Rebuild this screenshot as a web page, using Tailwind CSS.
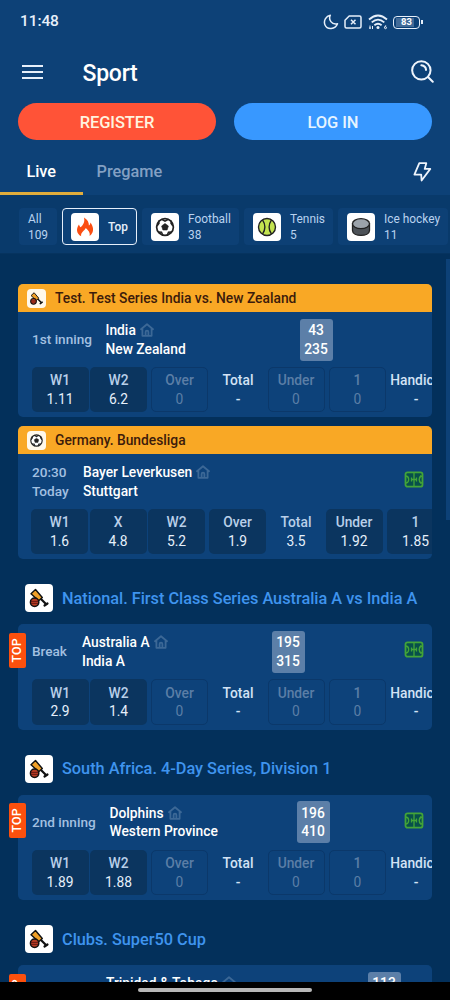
<!DOCTYPE html>
<html lang="en">
<head>
<meta charset="utf-8">
<meta name="viewport" content="width=device-width, initial-scale=1">
<title>Sport</title>
<script src="https://cdn.jsdelivr.net/npm/@tailwindcss/browser@4"></script>
</head>
<body class="bg-black">
<svg class="hidden" xmlns="http://www.w3.org/2000/svg">
  <symbol id="cricket" viewBox="0 0 28 28">
    <path d="M15.500 14.500 21 20" stroke="#111" stroke-width="2.200" stroke-linecap="round"/>
    <path d="m19.500 21.500 3-2" stroke="#111" stroke-width="2.200" stroke-linecap="round"/>
    <path d="m6 9.700 4.500-4.200 6.800 8-3.600 3.300z" fill="#f0a028" stroke="#111" stroke-width="1.400" stroke-linejoin="round"/>
    <circle cx="9.600" cy="18.200" r="4.200" fill="#b93c22" stroke="#111" stroke-width="1.500"/>
    <path d="M6 17.400h7.200M6 19.400h7" stroke="#511" stroke-width=".8"/>
  </symbol>
  <symbol id="ball" viewBox="0 0 28 28">
    <circle cx="14" cy="14" r="8.400" fill="#fff" stroke="#222" stroke-width="1.700"/>
    <path d="m14 10.500 3.400 2.500-1.300 4h-4.200l-1.300-4z" fill="#222" stroke="#222" stroke-width=".6" stroke-linejoin="round"/>
    <path d="m10.700 6.300 3.300 1.900 3.300-1.900M6 13l2-2.800-.4-2.500M22 13l-2-2.800.4-2.500M7.300 19l3.200.2 1.200 2.800M20.700 19l-3.200.2-1.200 2.800" fill="none" stroke="#222" stroke-width="1.500"/>
  </symbol>
  <symbol id="home" viewBox="0 0 14 14">
    <path d="M1 6.200 7 1.200l6 5M2.400 5.400v7.400h9.200V5.400M5.600 12.600V9a1.400 1.400 0 0 1 2.800 0v3.600" fill="none" stroke="#3c6896" stroke-width="1.800" stroke-linejoin="round" stroke-linecap="round"/>
  </symbol>
  <symbol id="pitch" viewBox="0 0 20 17">
    <rect x="1.500" y="1.300" width="17" height="14.400" rx="2" fill="#07504a" stroke="#43a438" stroke-width="1.800"/>
    <path d="M10 1.500v14M2 5c3.600.6 3.600 6.400 0 7M18 5c-3.600.6-3.600 6.400 0 7M7.500 8.500h5M7.500 6.500v4M12.500 6.500v4M17 4.500c-2.500 2-2.500 6 0 8" fill="none" stroke="#43a438" stroke-width="1.300"/>
  </symbol>
</svg>

<div class="flex h-[1000px] w-[450px] flex-col overflow-hidden bg-[#03305b] text-white" style="font-family:Roboto,'Liberation Sans',sans-serif">
  <!-- Top bar -->
  <header class="h-[195px] shrink-0 bg-[#0d4177]">
    <div class="flex h-[44px] items-center pl-5 pr-[27.500px]">
      <span class="text-[15.500px] font-medium tracking-[-0.1px] text-[#e6effa]">11:48</span>
      <div class="ml-auto flex items-center">
        <svg class="mr-[5px] h-4 w-4" viewBox="0 0 16 16" fill="none" stroke="#e6effa" stroke-width="1.500" stroke-linejoin="round"><path d="M7.300 1.200C5.200 5.800 8.500 11 14.500 9.700 12.300 15.600 4 16 1.900 10.700.3 6.500 3.200 2 7.300 1.200z"/></svg>
        <svg class="mr-[5.500px] h-[14px] w-[18px]" viewBox="0 0 18 14" fill="none" stroke="#e6effa" stroke-width="1.500" stroke-linejoin="round"><path d="M5.200 1h10.300a1.500 1.500 0 0 1 1.500 1.500v9a1.500 1.500 0 0 1-1.500 1.500h-13A1.500 1.500 0 0 1 1 11.500V5.300z"/><path d="m7 4.800 4.500 4.500m0-4.500L7 9.300"/></svg>
        <svg class="mr-[5.500px] h-4 w-5" viewBox="0 0 20 16" fill="none" stroke="#e6effa" stroke-width="1.800"><path d="M1 5.500q9-8 18 0M3.700 8.400q6.300-5.600 12.600 0M6.400 11.200q3.600-3 7.200 0"/><circle cx="10" cy="13.500" r="1.500" fill="#e6effa" stroke="none"/><path d="M2 11.500v3.500m-1-1h2M4.500 12v3M17.800 11.300l-1.300 2.200" stroke-width="1"/><circle cx="17.500" cy="13.700" r="1" stroke-width="1"/></svg>
        <div class="flex h-[13px] w-[27px] items-center justify-center rounded-[4px] border border-[#e6effa]"><span class="flex h-[9px] w-[21px] items-center justify-center bg-gradient-to-r from-[#426b98] from-85% to-transparent to-85% text-[9.500px] leading-none font-bold">83</span></div>
        <i class="ml-px h-1 w-[1.500px] bg-[#e6effa]"></i>
      </div>
    </div>
    <div class="flex h-[59px] items-center pr-[16px] pl-[22px]">
      <div class="mt-[-4px] flex w-[21px] flex-col gap-[4px] *:h-[2px] *:bg-[#e6effa]"><i></i><i></i><i></i></div>
      <h1 class="ml-[39.500px] text-[23px] leading-7 font-medium tracking-[-0.250px]">Sport</h1>
      <svg class="mt-[-5px] ml-auto h-[23px] w-[23px]" viewBox="0 0 24 24" fill="none" stroke="#eef4fc" stroke-width="2.100" stroke-linecap="round"><circle cx="10.800" cy="10.800" r="9.600"/><path d="m18 18 4.700 4.700M10.800 5.600q4.600.600 4.900 4.700"/></svg>
    </div>
    <div class="flex gap-[18px] pl-[18px] text-[16.500px] font-medium tracking-[-0.100px] *:flex *:h-[37px] *:w-[198px] *:items-center *:justify-center *:rounded-full *:pt-[3px]">
      <button class="bg-[#ff5337] text-[#fff3df]">REGISTER</button>
      <button class="bg-[#3898ff] text-[#e6f4ff]">LOG IN</button>
    </div>
    <nav class="flex h-[55px] text-[16.300px] font-medium">
      <div class="flex w-[82.500px] items-center justify-center border-b-[3px] border-[#e1ad3c] pt-[13px]">Live</div>
      <div class="ml-[14px] flex items-center pt-[10px] text-[#83a0c3]">Pregame</div>
      <svg class="mt-[22px] mr-[18px] ml-auto h-5 w-[19px]" viewBox="0 0 19 20" fill="none" stroke="#eef4fc" stroke-width="1.800" stroke-linejoin="round"><path d="M6.300 1.200h7l-1.600 5.700h5.600L8.600 18.500l-.4-5.900H1.400z"/></svg>
    </nav>
  </header>

  <!-- Sport filter -->
  <div class="flex h-[59px] shrink-0 gap-[5px] overflow-hidden border-b border-[#06335f] bg-[#093a6b] pt-[13px] pl-[19px] text-[11.900px] leading-[16px] text-[#b9d2ef] *:flex *:h-[37px] *:shrink-0 *:items-center *:rounded-[4px]">
    <div class="w-[38px] bg-[#0d4075] pl-[9px]">All<br>109</div>
    <div class="w-[75px] border-[1.500px] border-[#e6effa] bg-[#0d4177] pl-2 font-medium text-[#e6effa]">
      <svg class="mr-[9px] h-7 w-7 rounded-[4px] bg-white" viewBox="0 0 28 28"><path d="M13 4.500c3.500 2 5 4.700 4.900 8 1-.7 1.400-1.700 1.500-3 3 4 4.500 9.500-.8 13.500.8-3.200-.9-5.400-3.800-8-1.200 2.800-5.500 4.500-4.600 8.300C5.200 20.500 5 15.500 8 11.500c.3 1.300.7 2 1.700 2.700 2.800-2.700 4.300-5.500 3.300-9.700z" fill="#fb4e12"/></svg>Top</div>
    <div class="w-[97px] bg-[#0d4075] pl-[9px]"><svg class="mr-[9px] h-7 w-7 shrink-0 rounded-[4px] bg-white"><use href="#ball"/></svg><p>Football<br>38</p></div>
    <div class="w-[89px] bg-[#0d4075] pl-[9px]"><svg class="mr-[9px] h-7 w-7 shrink-0 rounded-[4px] bg-white" viewBox="0 0 28 28" stroke="#222" stroke-width="1.400"><circle cx="14" cy="14" r="8.500" fill="#c3e34f"/><path d="M9.500 6.800q4.800 7.200 0 14.400M18.500 6.800q-4.800 7.200 0 14.400" fill="none"/></svg><p>Tennis<br>5</p></div>
    <div class="w-[110px] bg-[#0d4075] pl-[9px]"><svg class="mr-[9px] h-7 w-7 shrink-0 rounded-[4px] bg-white" viewBox="0 0 28 28" stroke="#222" stroke-width="1.300"><path d="M5.500 11v6.500c0 6.500 17 6.500 17 0V11z" fill="#4d5258"/><ellipse cx="14" cy="10.700" rx="8.500" ry="5" fill="#9ca3ab"/></svg><p class="whitespace-nowrap">Ice hockey<br>11</p></div>
  </div>

  <!-- Events -->
  <main class="flex h-[728px] shrink-0 justify-between overflow-hidden pl-[18px]">
    <div class="w-[414px] shrink-0 pt-[30px]">
      <section class="h-[133px] overflow-hidden rounded-[5px] bg-[#0d427a]">
        <h2 class="flex h-[27.500px] items-center bg-[#f9a825] pt-px pl-[9px] text-[13.800px] font-medium text-[#3c1b0b]"><svg class="mr-[9px] h-[19px] w-[19px] rounded-[4px] bg-[#fff8ea]"><use href="#cricket"/></svg>Test. Test Series India vs. New Zealand</h2>
        <div class="flex h-[55px] items-center pt-px pl-[14px] text-[13.800px] leading-[18.500px] font-medium">
          <p class="w-[73.500px] shrink-0 text-[13.600px] text-[#a3c0e1]">1st inning</p>
          <div class="w-[194px] shrink-0"><p class="flex items-center gap-[4px]">India <svg class="h-[14px] w-[14px]"><use href="#home"/></svg></p><p>New Zealand</p></div>
          <div class="flex h-[42px] w-[33px] flex-col justify-center rounded-[3px] bg-[#5c7fa8] text-center"><p>43</p><p>235</p></div>
        </div>
        <div class="flex w-[460px] pl-[13.500px] text-center text-[13.800px] leading-[18.500px] font-medium text-[#b9cfe9] *:h-[45.500px] *:w-[57px] *:shrink-0 *:rounded-[5px] *:pt-[4.500px]">
          <div class="bg-[#0b355f]">W1<p class="font-normal text-[#e6f0fb]">1.11</p></div>
          <div class="ml-[1.500px] bg-[#0b355f]">W2<p class="font-normal text-[#e6f0fb]">6.2</p></div>
          <div class="ml-[4px] border border-[#0b386a] text-[#5b7ea6]"><p class="-mt-px">Over</p><p class="font-normal">0</p></div>
          <div class="ml-[1.500px] text-[#d3e3f5]">Total<p>-</p></div>
          <div class="ml-[1px] border border-[#0b386a] text-[#5b7ea6]"><p class="-mt-px">Under</p><p class="font-normal">0</p></div>
          <div class="ml-[4.500px] border border-[#0b386a] text-[#5b7ea6]"><p class="-mt-px">1</p><p class="font-normal">0</p></div>
          <div class="ml-[1.500px] flex flex-col items-center text-[#d3e3f5]"><span class="ml-[7px]">Handicap</span><p>-</p></div>
        </div>
      </section>

      <section class="mt-[9px] h-[133px] overflow-hidden rounded-[5px] bg-[#0d427a]">
        <h2 class="flex h-[27.500px] items-center bg-[#f9a825] pt-px pl-[9px] text-[13.800px] font-medium text-[#3c1b0b]"><svg class="mr-[9px] h-[19px] w-[19px] rounded-[4px] bg-[#fff8ea]"><use href="#ball"/></svg>Germany. Bundesliga</h2>
        <div class="flex h-[55px] items-center pt-px pr-[8px] pl-[14px] text-[13.800px] leading-[18.500px] font-medium">
          <p class="w-[51px] shrink-0 text-[13.600px] text-[#a3c0e1]">20:30<br>Today</p>
          <div><p class="flex items-center gap-[4px]">Bayer Leverkusen <svg class="h-[14px] w-[14px]"><use href="#home"/></svg></p><p>Stuttgart</p></div>
          <svg class="mt-[-4px] ml-auto h-[17px] w-5"><use href="#pitch"/></svg>
        </div>
        <div class="flex w-[460px] pl-[13px] text-center text-[13.800px] leading-[18.500px] font-medium text-[#b9cfe9] *:h-[45.500px] *:w-[57px] *:shrink-0 *:rounded-[5px] *:pt-[4.500px]">
          <div class="bg-[#0b355f]">W1<p class="font-normal text-[#e6f0fb]">1.6</p></div>
          <div class="ml-[1.500px] bg-[#0b355f]">X<p class="font-normal text-[#e6f0fb]">4.8</p></div>
          <div class="ml-[1.500px] bg-[#0b355f]">W2<p class="font-normal text-[#e6f0fb]">5.2</p></div>
          <div class="ml-[4px] bg-[#0b355f]">Over<p class="font-normal text-[#e6f0fb]">1.9</p></div>
          <div class="ml-[1.500px]">Total<p class="font-normal text-[#e6f0fb]">3.5</p></div>
          <div class="ml-[1px] bg-[#0b355f]">Under<p class="font-normal text-[#e6f0fb]">1.92</p></div>
          <div class="ml-[4.500px] bg-[#0b355f]">1<p class="font-normal text-[#e6f0fb]">1.85</p></div>
        </div>
      </section>

      <h2 class="flex h-[65px] items-center pt-[13px] pl-[7px] text-[16.300px] font-medium text-[#3f94ee]"><svg class="mr-[9px] h-7 w-7 rounded-[4px] bg-white"><use href="#cricket"/></svg><span class="pt-[2px]">National. First Class Series Australia A vs India A</span></h2>
      <section class="relative h-[105.500px]">
        <div class="h-full overflow-hidden rounded-[5px] bg-[#0d427a]">
          <div class="flex h-[55px] items-center pr-[8px] pl-[14px] text-[13.800px] leading-[18.500px] font-medium">
            <p class="w-[50px] shrink-0 text-[13.600px] text-[#a3c0e1]">Break</p>
            <div class="w-[189.500px] shrink-0"><p class="flex items-center gap-[4px]">Australia A <svg class="h-[14px] w-[14px]"><use href="#home"/></svg></p><p>India A</p></div>
            <div class="flex h-[42px] w-[33px] flex-col justify-center rounded-[3px] bg-[#5c7fa8] text-center"><p>195</p><p>315</p></div>
            <svg class="mt-[-4px] ml-auto h-[17px] w-5"><use href="#pitch"/></svg>
          </div>
          <div class="flex w-[460px] pl-[13.500px] text-center text-[13.800px] leading-[18.500px] font-medium text-[#b9cfe9] *:h-[45.500px] *:w-[57px] *:shrink-0 *:rounded-[5px] *:pt-[4.500px]">
            <div class="bg-[#0b355f]">W1<p class="font-normal text-[#e6f0fb]">2.9</p></div>
            <div class="ml-[1.500px] bg-[#0b355f]">W2<p class="font-normal text-[#e6f0fb]">1.4</p></div>
            <div class="ml-[4px] border border-[#0b386a] text-[#5b7ea6]"><p class="-mt-px">Over</p><p class="font-normal">0</p></div>
            <div class="ml-[1.500px] text-[#d3e3f5]">Total<p>-</p></div>
            <div class="ml-[1px] border border-[#0b386a] text-[#5b7ea6]"><p class="-mt-px">Under</p><p class="font-normal">0</p></div>
            <div class="ml-[4.500px] border border-[#0b386a] text-[#5b7ea6]"><p class="-mt-px">1</p><p class="font-normal">0</p></div>
            <div class="ml-[1.500px] flex flex-col items-center text-[#d3e3f5]"><span class="ml-[7px]">Handicap</span><p>-</p></div>
          </div>
        </div>
        <span class="absolute top-[8.500px] left-[-9px] flex h-[35px] w-[17px] items-center justify-center rounded-[2px] bg-[#fb500d]"><b class="-rotate-90 text-[12.500px] font-medium">TOP</b></span>
      </section>

      <h2 class="flex h-[65px] items-center pt-[13px] pl-[7px] text-[16.300px] font-medium text-[#3f94ee]"><svg class="mr-[9px] h-7 w-7 rounded-[4px] bg-white"><use href="#cricket"/></svg><span class="pt-[2px]">South Africa. 4-Day Series, Division 1</span></h2>
      <section class="relative h-[105.500px]">
        <div class="h-full overflow-hidden rounded-[5px] bg-[#0d427a]">
          <div class="flex h-[55px] items-center pr-[8px] pl-[14px] text-[13.800px] leading-[18.500px] font-medium">
            <p class="w-[77.500px] shrink-0 text-[13.600px] text-[#a3c0e1]">2nd inning</p>
            <div class="w-[187px] shrink-0"><p class="flex items-center gap-[4px]">Dolphins <svg class="h-[14px] w-[14px]"><use href="#home"/></svg></p><p>Western Province</p></div>
            <div class="flex h-[42px] w-[33px] flex-col justify-center rounded-[3px] bg-[#5c7fa8] text-center"><p>196</p><p>410</p></div>
            <svg class="mt-[-4px] ml-auto h-[17px] w-5"><use href="#pitch"/></svg>
          </div>
          <div class="flex w-[460px] pl-[13.500px] text-center text-[13.800px] leading-[18.500px] font-medium text-[#b9cfe9] *:h-[45.500px] *:w-[57px] *:shrink-0 *:rounded-[5px] *:pt-[4.500px]">
            <div class="bg-[#0b355f]">W1<p class="font-normal text-[#e6f0fb]">1.89</p></div>
            <div class="ml-[1.500px] bg-[#0b355f]">W2<p class="font-normal text-[#e6f0fb]">1.88</p></div>
            <div class="ml-[4px] border border-[#0b386a] text-[#5b7ea6]"><p class="-mt-px">Over</p><p class="font-normal">0</p></div>
            <div class="ml-[1.500px] text-[#d3e3f5]">Total<p>-</p></div>
            <div class="ml-[1px] border border-[#0b386a] text-[#5b7ea6]"><p class="-mt-px">Under</p><p class="font-normal">0</p></div>
            <div class="ml-[4.500px] border border-[#0b386a] text-[#5b7ea6]"><p class="-mt-px">1</p><p class="font-normal">0</p></div>
            <div class="ml-[1.500px] flex flex-col items-center text-[#d3e3f5]"><span class="ml-[7px]">Handicap</span><p>-</p></div>
          </div>
        </div>
        <span class="absolute top-[8.500px] left-[-9px] flex h-[35px] w-[17px] items-center justify-center rounded-[2px] bg-[#fb500d]"><b class="-rotate-90 text-[12.500px] font-medium">TOP</b></span>
      </section>

      <h2 class="flex h-[65px] items-center pt-[13px] pl-[7px] text-[16.300px] font-medium text-[#3f94ee]"><svg class="mr-[9px] h-7 w-7 rounded-[4px] bg-white"><use href="#cricket"/></svg><span class="pt-[2px]">Clubs. Super50 Cup</span></h2>
      <section class="relative h-[105.500px] rounded-[5px] bg-[#0d427a]">
        <div class="flex h-[55px] items-center pl-[88px] text-[13.800px] leading-[18.500px] font-medium">
          <div class="w-[261.500px] shrink-0"><p class="flex items-center gap-[4px]">Trinidad &amp; Tobago <svg class="h-[14px] w-[14px]"><use href="#home"/></svg></p><p>&nbsp;</p></div>
          <div class="flex h-[42px] w-[33px] flex-col justify-center rounded-[3px] bg-[#5c7fa8] text-center"><p>113</p><p>&nbsp;</p></div>
        </div>
        <span class="absolute top-[8.500px] left-[-9px] flex h-[35px] w-[17px] items-center justify-center rounded-[2px] bg-[#fb500d]"><b class="-rotate-90 text-[12.500px] font-medium">TOP</b></span>
      </section>
    </div>
    <aside class="mt-[5px] h-[261px] w-[4px] bg-[#0d4177]"></aside>
  </main>

  <!-- Gesture bar -->
  <footer class="flex h-[18px] shrink-0 justify-center bg-black pt-[5.500px]"><i class="h-[4.500px] w-[174px] rounded-full bg-[#b8b8b8]"></i></footer>
</div>
</body>
</html>
